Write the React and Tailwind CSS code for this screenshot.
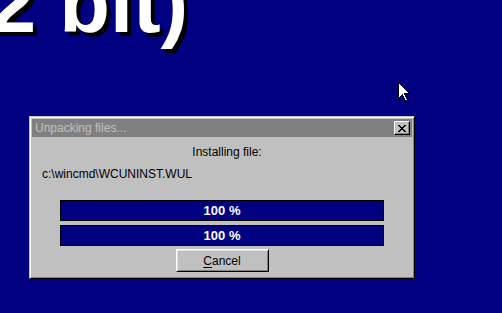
import React from 'react';

const font = { fontFamily: '"Liberation Sans", Arial, sans-serif' };

const ProgressBar = ({ value }) => (
  <div className="h-[21px] w-[324px] border border-black bg-[#000080] flex items-center justify-center">
    <span className="text-white font-bold text-[13px] leading-none">{value} %</span>
  </div>
);

const Cursor = () => (
  <svg width="14" height="22" viewBox="0 0 14 22" className="absolute left-[398px] top-[82px]">
    <path d="M0.5 0.5 L0.5 16.5 L4.5 12.5 L7.5 19.5 L9.5 18.5 L6.5 11.5 L11.5 11.5 Z" fill="#fff" stroke="#000" strokeWidth="1" shapeRendering="crispEdges" />
  </svg>
);

export default function App() {
  return (
    <div className="relative w-[502px] h-[313px] bg-[#000080] overflow-hidden" style={font}>
      {/* desktop caption, cut at the top */}
      <div className="absolute left-[-10px] top-[-38px] text-[83px] leading-[83px] font-bold text-white whitespace-nowrap [text-shadow:4px_4px_0_#000]">
        2 bit)
      </div>

      <Cursor />

      {/* dialog window */}
      <div className="absolute left-[29px] top-[116px] w-[386px] h-[163px] bg-[#c0c0c0] border border-t-[#c0c0c0] border-l-[#c0c0c0] border-r-black border-b-black shadow-[inset_1px_1px_#fff,inset_-1px_-1px_#808080] p-[2px] flex flex-col">
        <div className="h-[18px] bg-[#808080] flex items-center justify-between pl-[3px] pr-[2px]">
          <span className="text-[12px] text-[#c0c0c0] leading-none">Unpacking files...</span>
          <div className="w-[16px] h-[14px] bg-[#c0c0c0] border border-t-white border-l-white border-r-black border-b-black shadow-[inset_-1px_-1px_#808080] flex items-center justify-center">
            <svg width="8" height="7" viewBox="0 0 8 7" shapeRendering="crispEdges">
              <path d="M0 0h2v1h1v1h2v-1h1v-1h2v1h-1v1h-1v1h-1v1h1v1h1v1h1v1h-2v-1h-1v-1h-2v1h-1v1h-2v-1h1v-1h1v-1h1v-1h-1v-1h-1v-1h-1z" fill="#000" />
            </svg>
          </div>
        </div>

        <div className="mt-[8px] text-center text-[12px] leading-[14px] text-black pl-[10px]">Installing file:</div>
        <div className="mt-[8px] text-[12px] leading-[14px] text-black pl-[10px]">c:\wincmd\WCUNINST.WUL</div>

        <div className="mt-[19px] flex flex-col items-center gap-[4px]">
          <ProgressBar value={100} />
          <ProgressBar value={100} />
        </div>

        <div className="mt-[3px] flex justify-center">
          <button className="w-[93px] h-[23px] bg-[#c0c0c0] border border-t-white border-l-white border-r-black border-b-black shadow-[inset_1px_1px_#dfdfdf,inset_-1px_-1px_#808080] text-[12px] text-black leading-none">
            <span className="underline underline-offset-2">C</span>ancel
          </button>
        </div>
      </div>
    </div>
  );
}
